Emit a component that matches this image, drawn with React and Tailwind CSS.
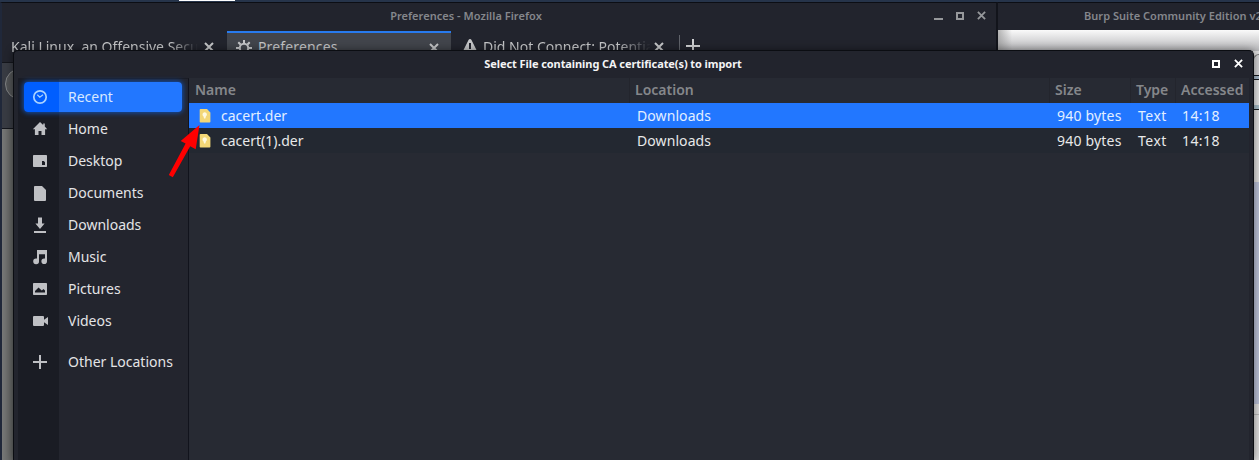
import React from "react";

const Glyph = ({ children, className = "" }) => (
  <svg viewBox="0 0 16 16" className={"block h-4 w-4 shrink-0 " + className} fill="currentColor">
    {children}
  </svg>
);

const icons = {
  Recent: (
    <g fill="none" stroke="currentColor" strokeWidth="1.7">
      <circle cx="8" cy="8" r="6.2" />
      <path d="M5.3 5.8 7.8 8.2 11 5.8" strokeWidth="1.2" />
    </g>
  ),
  Home: <path d="M8 1 .8 8.2h2.1V14h3.6v-4h3v4h3.6V8.2h2.1L12.8 5.6V2.4h-1.6v1.7z" />,
  Desktop: <path fillRule="evenodd" d="M1.8 2h12.4q.8 0 .8.8v10.4q0 .8-.8.8H1.8q-.8 0-.8-.8V2.8Q1 2 1.8 2zM10 8v4h3V9.3L11.8 8z" />,
  Documents: <path d="M2.8 1H10l4 4v10q0 1-1 1H3q-1 0-1-1V2q0-1 .8-1z" />,
  Downloads: <path d="M6 .5h4v6h2.6L8 12 3.400 6.500H6zM2 14h12v2H2z" />,
  Music: <path d="M5 1h10v11.2A2.8 2.8 0 1 1 12.2 9.400q.4 0 .8.1V5.200H7v7A2.9 2.9 0 1 1 4.1 9.400q.5 0 .9.100z" />,
  Pictures: <path fillRule="evenodd" d="M1.800 2h12.400q.8 0 .8.8v10.400q0 .8-.8.8H1.800q-.8 0-.8-.8V2.800q0-.8.8-.8zM3 11.500h10V9.500l-1.500-1.500-1.700 1.500L6.500 6.400 3 10z" />,
  Videos: <path d="M2 3h9q1 0 1 1v2.800L16 4v8l-4-2.800V12q0 1-1 1H2q-1 0-1-1V4q0-1 1-1z" />,
  "Other Locations": <path d="M7 1h2v6h6v2H9v6H7V9H1V7h6z" />,
};

const places = ["Recent", "Home", "Desktop", "Documents", "Downloads", "Music", "Pictures", "Videos", "Other Locations"];

const Cross = ({ className = "" }) => (
  <svg viewBox="0 0 10 10" className={"block shrink-0 " + className} fill="none" stroke="currentColor" strokeWidth="2">
    <path d="M1 1 9 9M9 1 1 9" />
  </svg>
);

const Place = ({ name }) => {
  const active = name === "Recent";
  return (
    <div className={"flex h-8 items-center pl-1.5 pr-1.5" + (name === "Other Locations" ? " mt-[9px]" : "")}>
      <div
        className={
          "flex h-[30px] w-full items-center rounded-[4px] " +
          (active
            ? "bg-[linear-gradient(to_right,#005eff_35px,#2277ff_35px)] text-[#d8e8ff] shadow-[0_0_5px_1px_#134fae]"
            : "text-[#e3e4e6]")
        }
      >
        <Glyph className={"ml-2 mr-5 " + (active ? "text-[#a9d2ff]" : "text-[#bfc0c4]")}>{icons[name]}</Glyph>
        <span className="whitespace-nowrap pb-[2px]">{name}</span>
      </div>
    </div>
  );
};

const FileRow = ({ name, selected }) => (
  <div
    className={
      "grid h-[25px] grid-cols-[440px_420px_81px_44px_75px] items-center whitespace-nowrap " +
      (selected ? "bg-[#2277ff] text-[#e3efff]" : "bg-[#232831] text-[#e8e8e9]")
    }
  >
    <div className="flex items-center pl-2">
      <svg viewBox="0 0 16 16" className="mr-2 h-4 w-4">
        <path d="M3.500 1H10l3.400 3.400v9.300q0 .8-.8.8H3.500q-.8 0-.8-.8V1.800q0-.8.8-.8z" fill="#f3d777" />
        <path d="M7.700 4.300a2.200 2.200 0 0 1 1.300 4L8.300 10.500H7.100L6.400 8.300a2.200 2.200 0 0 1 1.300-4z" fill="#fff9df" />
      </svg>
      <span>{name}</span>
    </div>
    <span className="pl-2 tracking-[0.08px]">Downloads</span>
    <span className="pl-2 tracking-[0.2px]">940 bytes</span>
    <span className="pl-2 tracking-[0.5px]">Text</span>
    <span className="pl-2 tracking-[0.4px]">14:18</span>
  </div>
);

const Firefox = () => (
  <div className="absolute left-0 top-[2px] flex h-[458px] w-[998px] flex-col border-x-2 border-t border-l-[#20283a] border-r-[#12141b] border-t-[#0c0e14] bg-[#22242d]">
    <div className="relative flex h-[28px] items-center justify-center text-[11px] font-semibold text-[#85878c]">
      <span className="whitespace-nowrap pb-[2px] pr-[66px] tracking-[0.04px]">Preferences - Mozilla Firefox</span>
      <div className="absolute right-[10px] top-[8px] flex items-center gap-[13px]">
        <div className="mt-[6px] h-[2px] w-[9px] bg-[#96989b]" />
        <div className="h-2 w-2 border-2 border-[#96989b]" />
        <Cross className="h-[9px] w-[9px] text-[#96989b]" />
      </div>
    </div>
    <div className="flex h-[31px] text-[14px] text-[#c6c7c9]">
      <div className="flex w-[225px] items-center pl-[9px]">
        <span className="w-[189px] overflow-hidden whitespace-nowrap pb-px [mask-image:linear-gradient(to_right,#000_160px,transparent_187px)]">
          Kali Linux, an Offensive Security
        </span>
        <Cross className="ml-[4px] h-[10px] w-[10px]" />
      </div>
      <div className="flex w-[224px] items-center border-t-2 border-[#287bef] bg-[#42454c] pl-[9px] pr-3">
        <svg viewBox="0 0 16 16" className="mr-[6px] h-4 w-4" fill="none" stroke="currentColor">
          <circle cx="8" cy="8" r="4.200" strokeWidth="2" />
          <path d="M8 0v3M8 13v3M0 8h3M13 8h3M2.300 2.300l2.200 2.200M11.500 11.500l2.200 2.200M13.700 2.300l-2.200 2.200M4.500 11.500l-2.200 2.200" strokeWidth="2" />
        </svg>
        <span className="pb-[3px] tracking-[0.15px]">Preferences</span>
        <Cross className="ml-auto h-[10px] w-[10px]" />
      </div>
      <div className="flex w-[228px] items-center pl-[11px]">
        <svg viewBox="0 0 16 16" className="mr-[5px] h-4 w-4 shrink-0" fill="currentColor">
          <path fillRule="evenodd" d="M8 0q1 0 1.500 1l6 12q.6 2-1 2h-13q-1.600 0-1-2l6-12Q7 0 8 0zM7 4v6h2V4zM7 11.500v2h2v-2z" />
        </svg>
        <span className="w-[167px] shrink-0 overflow-hidden whitespace-nowrap pb-px [mask-image:linear-gradient(to_right,#000_135px,transparent_168px)]">
          Did Not Connect: Potential Security
        </span>
        <Cross className="ml-[4px] h-[10px] w-[10px] shrink-0" />
      </div>
      <div className="mt-[4px] h-6 w-px bg-[#60636a]" />
      <Glyph className="ml-[5px] mt-[7px] text-[#d0d1d3]">
        <path d="M7 1h2v6h6v2H9v6H7V9H1V7h6z" />
      </Glyph>
    </div>
    <div className="h-[67px] shrink-0 overflow-hidden border-y border-[#14161c] bg-[#383b43] pl-[3px] pt-[5px]">
      <div className="h-[32px] w-[32px] rounded-full border border-[#808284] bg-[#515355]" />
    </div>
    <div className="grow bg-[linear-gradient(to_right,#777877,#5e605f_12px)]" />
  </div>
);

const Burp = () => (
  <div className="absolute left-[998px] top-[2px] flex h-[458px] w-[261px] flex-col overflow-hidden border-t border-[#0c0e14] bg-[#dedede]">
    <div className="flex h-[27px] shrink-0 items-center bg-[#22242d] pl-[86px] text-[11px] font-semibold text-[#85878c]">
      <span className="whitespace-nowrap pb-px tracking-[0.03px]">Burp Suite Community Edition v2.1</span>
    </div>
    <div className="h-[21px] shrink-0 bg-[linear-gradient(to_right,#8889_0,transparent_14px),linear-gradient(to_bottom,#fafafa,#b5b5b8)]" />
    <div className="ml-[255px] flex grow flex-col">
      <div className="mt-[3px] h-[21px] rounded-tl-md border-l border-t border-[#777] bg-[#d3d3d5]" />
      <div className="h-[5px] border-y border-[#15171c] bg-[#a5b7c8]" />
      <div className="h-[25px] bg-[#e1e1e2]" />
      <div className="h-[5px] border-b border-[#15171c] bg-[#a5bac5]" />
      <div className="h-[72px] bg-[#dedddc]" />
      <div className="h-[222px] bg-[#b9bfd5]" />
      <div className="h-[11px] border-b border-[#b9b9b9] bg-[#dddcdc]" />
      <div className="grow bg-[#dedddd]" />
    </div>
  </div>
);

const Dialog = () => (
  <div className="absolute left-[13px] top-[50px] flex h-[410px] w-[1241px] flex-col rounded-t-[5px] border-x border-t border-[#0b0d12] bg-[#22242d] shadow-[0_0_9px_#0007]">
    <div className="relative flex h-[27px] shrink-0 items-center justify-center text-[11px] font-bold text-[#f4f4f5]">
      <span className="whitespace-nowrap pb-px pr-[41px] tracking-[-0.08px]">Select File containing CA certificate(s) to import</span>
      <div className="absolute right-[10px] top-[8px] flex items-center gap-[14px]">
        <div className="h-2 w-2 border-2 border-white" />
        <Cross className="h-[9px] w-[9px] text-white" />
      </div>
    </div>
    <div className="ml-1 mr-1 flex grow text-[14px]">
      <div className="w-[171px] shrink-0 border-r border-t border-r-[#11131c] border-t-[#1b1d25] bg-[linear-gradient(to_right,#1a1c24_41px,#23252e_41px)] pt-[2px]">
        {places.map((name) => (
          <Place key={name} name={name} />
        ))}
      </div>
      <div className="w-[1060px] bg-[#272a33]">
        <div className="grid h-[25px] grid-cols-[440px_420px_81px_45px_74px] items-center font-semibold text-[#85878b]">
          <span className="pb-[2px] pl-1.5">Name</span>
          <span className="flex h-full items-center border-l border-[#23252d] pb-[2px] pl-[5px]">Location</span>
          <span className="flex h-full items-center border-l border-[#23252d] pb-[2px] pl-[5px]">Size</span>
          <span className="flex h-full items-center border-l border-[#23252d] pb-[2px] pl-[5px]">Type</span>
          <span className="flex h-full items-center border-l border-[#23252d] pb-[2px] pl-[5px]">Accessed</span>
        </div>
        <FileRow name="cacert.der" selected />
        <FileRow name="cacert(1).der" />
      </div>
    </div>
  </div>
);

export default function App() {
  return (
    <div className="relative h-[460px] w-[1259px] overflow-hidden bg-[#26344a] font-['Noto_Sans',sans-serif]">
      <div className="ml-[179px] h-px w-14 bg-white" />
      <Burp />
      <Firefox />
      <Dialog />
      <svg viewBox="0 0 34 56" className="absolute left-[168px] top-[122px] h-14 w-[34px]">
        <path d="M31.500 3 12.700 19 17.600 21.600.8 53 4.800 55.200 22.200 24.300 27.700 27.300z" fill="#ff0000" />
      </svg>
    </div>
  );
}
